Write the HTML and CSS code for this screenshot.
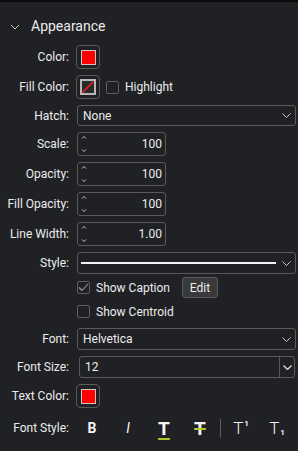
FILE: index.html
```html
<!DOCTYPE html>
<html lang="en">
<head>
  <meta charset="UTF-8" />
  <title>Appearance</title>
  <link rel="stylesheet" href="styles.css">
</head>
<body>
  <div class="panel">
    <div class="section-head">
      <svg class="caret" width="10" height="6" viewBox="0 0 10 6"><path d="M1 1l4 4 4-4" fill="none" stroke="#c8c8c8" stroke-width="1"/></svg>
      <span>Appearance</span>
    </div>

    <div class="form">
      <!-- Color -->
      <div class="lbl">Color:</div>
      <div class="ctl"><button class="swatch"><span class="chip"></span></button></div>

      <!-- Fill color -->
      <div class="lbl">Fill Color:</div>
      <div class="ctl">
        <button class="swatch">
          <span class="chip none">
            <svg width="12" height="12" viewBox="0 0 12 12"><path d="M0.5 11.5L11.5 0.5" stroke="#ff1a1a" stroke-width="1.4"/></svg>
          </span>
        </button>
        <span class="check"></span><span class="check-text">Highlight</span>
      </div>

      <!-- Hatch -->
      <div class="lbl">Hatch:</div>
      <div class="ctl"><div class="select"><span class="val">None</span><svg class="arrow" width="9" height="5" viewBox="0 0 9 5"><path d="M0.5 0.5l4 4 4-4" fill="none" stroke="#c8c8c8"/></svg></div></div>

      <div class="lbl">Scale:</div>
      <div class="ctl"><div class="spin"><svg class="steps" width="6" height="18" viewBox="0 0 6 18"><path d="M1 3.5l2-2 2 2M1 14.5l2 2 2-2" fill="none" stroke="#c8c8c8"/></svg><span>100</span></div></div>

      <div class="lbl">Opacity:</div>
      <div class="ctl"><div class="spin"><svg class="steps" width="6" height="18" viewBox="0 0 6 18"><path d="M1 3.5l2-2 2 2M1 14.5l2 2 2-2" fill="none" stroke="#c8c8c8"/></svg><span>100</span></div></div>

      <div class="lbl">Fill Opacity:</div>
      <div class="ctl"><div class="spin"><svg class="steps" width="6" height="18" viewBox="0 0 6 18"><path d="M1 3.5l2-2 2 2M1 14.5l2 2 2-2" fill="none" stroke="#c8c8c8"/></svg><span>100</span></div></div>

      <div class="lbl">Line Width:</div>
      <div class="ctl"><div class="spin"><svg class="steps" width="6" height="18" viewBox="0 0 6 18"><path d="M1 3.5l2-2 2 2M1 14.5l2 2 2-2" fill="none" stroke="#c8c8c8"/></svg><span>1.00</span></div></div>

      <!-- Line style -->
      <div class="lbl">Style:</div>
      <div class="ctl"><div class="select"><span class="line-sample"></span><svg class="arrow" width="9" height="5" viewBox="0 0 9 5"><path d="M0.5 0.5l4 4 4-4" fill="none" stroke="#c8c8c8"/></svg></div></div>

      <div class="lbl"></div>
      <div class="ctl lift">
        <span class="check on"><svg width="11" height="9" viewBox="0 0 11 9"><path d="M1 4.5l3 3 6-6.5" fill="none" stroke="#9a9a9a" stroke-width="1.1"/></svg></span>
        <span class="check-text">Show Caption</span>
        <button class="btn">Edit</button>
      </div>

      <div class="lbl"></div>
      <div class="ctl lift"><span class="check"></span><span class="check-text">Show Centroid</span></div>

      <!-- Font -->
      <div class="lbl">Font:</div>
      <div class="ctl"><div class="select"><span class="val">Helvetica</span><svg class="arrow" width="9" height="5" viewBox="0 0 9 5"><path d="M0.5 0.5l4 4 4-4" fill="none" stroke="#c8c8c8"/></svg></div></div>

      <div class="lbl">Font Size:</div>
      <div class="ctl"><div class="combo"><span class="val">12</span><span class="drop"><svg width="9" height="5" viewBox="0 0 9 5"><path d="M0.5 0.5l4 4 4-4" fill="none" stroke="#d8d8d8" stroke-width="1.3"/></svg></span></div></div>

      <div class="lbl">Text Color:</div>
      <div class="ctl"><button class="swatch"><span class="chip"></span></button></div>

      <div class="lbl">Font Style:</div>
      <div class="ctl tools">
        <span class="tool bold">B</span>
        <span class="tool italic">I</span>
        <span class="tool big under">T</span>
        <span class="tool big strike">T</span>
        <span class="sep"></span>
        <span class="tool thin">T<span class="mark up">1</span></span>
        <span class="tool thin">T<span class="mark down">1</span></span>
      </div>
    </div>
  </div>
</body>
</html>
```

FILE: styles.css
```css
body { margin: 0; background: #202124; font-family: Roboto, "Liberation Sans", sans-serif; color: #ececec; }
.panel { width: 298px; height: 451px; border-top: 2px solid #0a0a0a; box-sizing: border-box; }

.section-head { display: flex; align-items: center; height: 20px; padding: 14px 0 9px 10px; font-size: 14px; }
.section-head .caret { margin-right: 11px; margin-top: 1px; }

.form { display: grid; grid-template-columns: 69px 1fr; column-gap: 8px; row-gap: 6px; padding-right: 2px;
  grid-template-rows: 24px 24px 21px 24px 24px 24px 24px 22px 21px 15px 22px 22px 24px 28px; font-size: 12px; }
.lbl { display: flex; align-items: center; justify-content: flex-end; white-space: nowrap; }
.ctl { display: flex; align-items: center; min-width: 0; }
.ctl.lift { margin-top: -3px; margin-bottom: 3px; }

.swatch { width: 24px; height: 24px; padding: 0; margin-left: -1px; background: #202124; border: 1px solid #5a5a5a; border-radius: 4px;
  display: flex; align-items: center; justify-content: center; box-sizing: border-box; }
.chip { width: 15px; height: 15px; box-sizing: border-box; background: #ff0000; border: 1px solid #d9c0c0; display: block; }
.chip.none { background: #2a2a2a; border: 2px solid #b8b8b8; width: 16px; height: 16px; }
.chip.none svg { display: block; }

.check { width: 13px; height: 13px; border: 1px solid #5e5e5e; border-radius: 2px; box-sizing: border-box; flex: none;
  display: flex; align-items: center; justify-content: center; }
.ctl > .swatch + .check { margin-left: 6px; }
.check-text { margin-left: 6px; }

.select { flex: 1; height: 100%; border: 1px solid #5a5a5a; border-radius: 3px; box-sizing: border-box;
  display: flex; align-items: center; padding: 0 4px 0 5px; }
.select .val { flex: 1; }
.select .arrow { flex: none; margin-left: 6px; }
.line-sample { flex: 1; height: 2px; background: #f2f2f2; margin-left: -2px; }

.spin { width: 89px; height: 100%; border: 1px solid #5a5a5a; border-radius: 3px; box-sizing: border-box;
  display: flex; align-items: center; padding: 0 3px 0 3px; }
.spin .steps { flex: none; }
.spin span { flex: 1; text-align: right; }

.btn { margin-left: 12px; height: 21px; width: 36px; padding: 0; background: #38393b; border: 1px solid #5a5a5a; border-radius: 3px;
  color: #ececec; font: inherit; font-size: 12px; }

.combo { flex: 1; height: 100%; margin: 0 1px 0 2px; border: 1px solid #5a5a5a; border-radius: 3px; box-sizing: border-box;
  display: flex; align-items: center; padding-left: 5px; }
.combo .val { flex: 1; }
.combo .drop { width: 14px; height: 100%; border-left: 1px solid #5a5a5a; display: flex; align-items: center; justify-content: center; }

.tools { gap: 4px; margin-left: -1px; }
.tool { width: 32px; height: 28px; display: flex; align-items: center; justify-content: center; color: #f4f4f4; flex: none; }
.tool.bold { font-weight: 700; font-size: 14px; }
.tool.italic { font-style: italic; font-size: 14px; }
.tool.big { font-weight: 700; font-size: 19px; text-decoration-color: #b4c62c; text-decoration-thickness: 2px; }
.tool.under { text-decoration-line: underline; text-underline-offset: 3px; }
.tool.strike { text-decoration-line: line-through; }
.tool.thin { font-size: 17px; font-weight: 300; }
.mark { font-size: 8px; font-weight: 700; align-self: center; margin-left: 1px; }
.mark.up { margin-bottom: 10px; }
.mark.down { margin-top: 8px; }
.sep { width: 1px; height: 19px; background: #5e5e5e; flex: none; }
```
